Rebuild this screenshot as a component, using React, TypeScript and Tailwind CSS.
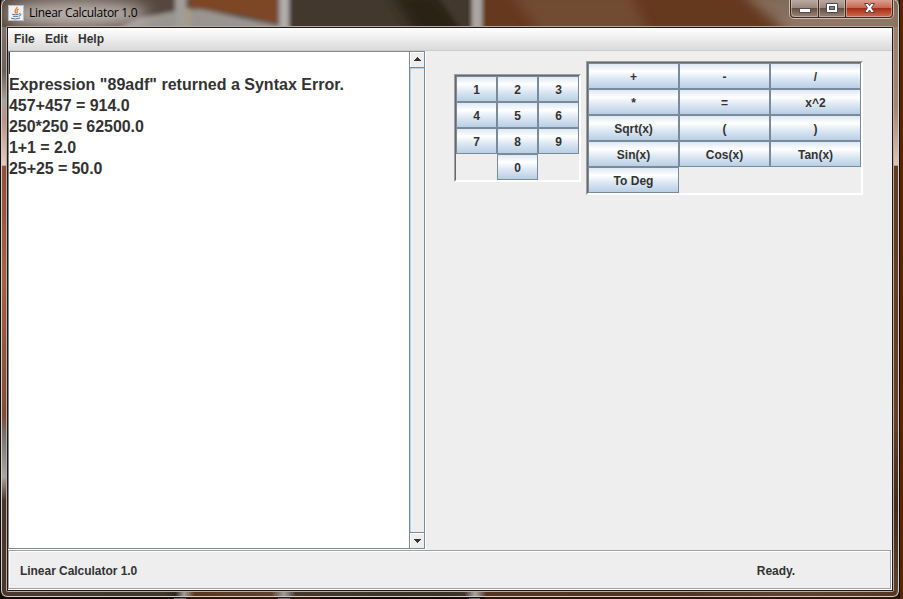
import React from "react";

const digits = ["1", "2", "3", "4", "5", "6", "7", "8", "9", "", "0", ""];
const functions = ["+", "-", "/", "*", "=", "x^2", "Sqrt(x)", "(", ")", "Sin(x)", "Cos(x)", "Tan(x)", "To Deg"];
const history = [
  { text: 'Expression "89adf" returned a Syntax Error.', spacing: "tracking-[0.015px]" },
  { text: "457+457 = 914.0", spacing: "tracking-[-0.03px]" },
  { text: "250*250 = 62500.0", spacing: "tracking-[-0.05px]" },
  { text: "1+1 = 2.0", spacing: "tracking-[-0.06px]" },
  { text: "25+25 = 50.0", spacing: "tracking-[-0.08px]" },
];

function Key({ label }: { label: string }) {
  if (!label) return <div />;
  return (
    <button className="flex h-[26px] items-center justify-center border border-[#7a8a99] bg-[linear-gradient(#dde8f3,#ffffff_30%,#dde8f3_60%,#b8cfe5)] pt-[2px] text-[12px] leading-none font-bold">
      {label}
    </button>
  );
}

function Glass() {
  return (
    <svg className="absolute inset-0" width="903" height="599" viewBox="0 0 903 599">
      <defs>
        <filter id="soft" x="-20%" y="-20%" width="140%" height="140%">
          <feGaussianBlur stdDeviation="2.2" />
        </filter>
        <filter id="softer" x="-20%" y="-40%" width="140%" height="180%">
          <feGaussianBlur stdDeviation="6" />
        </filter>
        <filter id="haze" x="-50%" y="-100%" width="200%" height="300%">
          <feGaussianBlur stdDeviation="8" />
        </filter>
        <linearGradient id="left" x1="0" y1="0" x2="0" y2="1">
          <stop offset="0" stopColor="#8b8078" />
          <stop offset=".12" stopColor="#6b605b" />
          <stop offset=".17" stopColor="#aaa29e" />
          <stop offset=".2" stopColor="#b99283" />
          <stop offset=".277" stopColor="#e5cbc1" />
          <stop offset=".279" stopColor="#925038" />
          <stop offset=".46" stopColor="#a86144" />
          <stop offset=".7" stopColor="#854d36" />
          <stop offset=".73" stopColor="#777270" />
          <stop offset=".8" stopColor="#aaa6a2" />
          <stop offset=".84" stopColor="#4a342b" />
          <stop offset="1" stopColor="#49392f" />
        </linearGradient>
        <linearGradient id="right" x1="0" y1="0" x2="0" y2="1">
          <stop offset="0" stopColor="#987d6c" />
          <stop offset=".18" stopColor="#a58573" />
          <stop offset=".277" stopColor="#dec5b7" />
          <stop offset=".279" stopColor="#653b21" />
          <stop offset=".7" stopColor="#68412a" />
          <stop offset=".85" stopColor="#442b1c" />
          <stop offset="1" stopColor="#60432f" />
        </linearGradient>
        <linearGradient id="bottom">
          <stop offset="0" stopColor="#49392f" />
          <stop offset=".18" stopColor="#40362c" />
          <stop offset=".192" stopColor="#30261c" />
          <stop offset=".202" stopColor="#a09d97" />
          <stop offset=".214" stopColor="#5b351d" />
          <stop offset=".3" stopColor="#60412c" />
          <stop offset=".314" stopColor="#a09d97" />
          <stop offset=".327" stopColor="#44372c" />
          <stop offset=".5" stopColor="#3b3026" />
          <stop offset=".516" stopColor="#403329" />
          <stop offset=".528" stopColor="#aaa7a2" />
          <stop offset=".541" stopColor="#55351f" />
          <stop offset=".75" stopColor="#51331f" />
          <stop offset=".88" stopColor="#60432f" />
          <stop offset="1" stopColor="#56351f" />
        </linearGradient>
      </defs>
      <rect width="903" height="599" fill="#120b07" />
      <rect x="180" y="597" width="140" height="2" fill="#2b1609" />
      <rect x="485" y="597" width="418" height="2" fill="#2b1609" />
      <rect x="899" width="4" height="599" fill="#552505" />
      <rect x="899" width="1" height="599" fill="#160e09" />
      <path d="M174 598.5h12M278 598.5h12M469 598.5h11" stroke="#697176" />
      <rect x="1" y="-5" width="898" height="602" rx="6" fill="#4b4034" />
      <rect x="2" y="0" width="5" height="596" fill="url(#left)" />
      <rect x="893" y="0" width="5" height="596" fill="url(#right)" />
      <rect x="4" y="591" width="892" height="5" fill="url(#bottom)" />
      <svg x="2" width="896" height="27" viewBox="2 0 896 27">
        <rect width="903" height="27" fill="#493b30" />
        <g filter="url(#soft)">
          <rect x="-5" y="-8" width="185" height="44" fill="#54463d" />
          <path d="M105 36L140 18L176 11L200 9L282 26V36Z" fill="#999592" />
          <rect x="175" y="-8" width="12" height="43" fill="#a09d99" />
          <path d="M188-8H278V24L240 15L190 8Z" fill="#7d4626" />
          <rect x="186" y="8" width="5" height="24" fill="#a59c7f" />
          <rect x="279" y="-8" width="10" height="43" fill="#b2aeab" />
          <rect x="289" y="-8" width="182" height="44" fill="#43382e" />
        </g>
        <path d="M390-8H436L470 36H418Z" fill="#2b2117" filter="url(#softer)" />
        <path d="M436-8H472V36H466Z" fill="#43372d" filter="url(#soft)" />
        <rect x="483" y="-8" width="420" height="44" fill="#65391e" />
        <g filter="url(#softer)">
          <path d="M510-8H630L650 36H542Z" fill="#714b31" />
          <path d="M740-8H910V36H790Z" fill="#836c5a" />
        </g>
        <g filter="url(#soft)">
          <rect x="471" y="-8" width="12" height="44" fill="#aaa6a3" />
        </g>
        <ellipse cx="76" cy="14" rx="72" ry="13" fill="#d5cfcb" opacity=".8" filter="url(#haze)" />
        <rect x="785" y="17" width="115" height="12" fill="#a48b7d" opacity=".65" filter="url(#haze)" />
      </svg>
      <path d="M5 0Q1.5 1 1.5 6V590Q1.5 596.5 8 596.5H892Q898.5 596.5 898.5 590V6Q898.5 1 895 0" fill="none" stroke="#d4ccc6" />
      <rect x="6.5" y="26.5" width="887" height="565" rx="1" fill="none" stroke="#b5aca5" />
      <rect x="7.5" y="27.5" width="885" height="563" fill="none" stroke="#241812" />
    </svg>
  );
}

function JavaIcon() {
  return (
    <svg width="16" height="16" viewBox="0 0 16 16">
      <rect x=".5" y=".5" width="15" height="15" fill="#edf1f4" stroke="#b6bec4" />
      <path d="M9 1.8C9.5 4 5.2 4.6 7.8 8.3M10.7 4.2C7.2 5.3 10.4 6.5 8.7 8.5" fill="none" stroke="#ed7c32" strokeWidth="1.3" />
      <path d="M4.2 9.3Q7 10.2 10.5 9.3M5 11.2Q7.5 12 10 11.2M3 13.2Q7.5 15 12 13M11 8.8Q14 8.5 12 10.8L10.6 11.2" fill="none" stroke="#55789a" />
    </svg>
  );
}

function WindowButtons() {
  return (
    <svg width="105" height="20" viewBox="789 0 105 20">
      <defs>
        <linearGradient id="control" x1="0" y1="0" x2="0" y2="1">
          <stop stopColor="#b9aaa0" />
          <stop offset=".46" stopColor="#9a877c" />
          <stop offset=".5" stopColor="#655044" />
          <stop offset="1" stopColor="#9a8475" />
        </linearGradient>
        <linearGradient id="close" x1="0" y1="0" x2="0" y2="1">
          <stop stopColor="#dda08d" />
          <stop offset=".46" stopColor="#c46754" />
          <stop offset=".5" stopColor="#a72d16" />
          <stop offset="1" stopColor="#cf6b4c" />
        </linearGradient>
      </defs>
      <path d="M789.5 0V14Q789.5 18.5 794 18.5H889Q893.5 18.5 893.5 14V0" fill="#3b2921" stroke="#cbbcb2" />
      <path d="M791 0H818V17H794Q791 17 791 14Z" fill="url(#control)" />
      <path d="M819 0H845V17H819Z" fill="url(#control)" />
      <path d="M846 0H892V14Q892 17 889 17H846Z" fill="url(#close)" />
      <path d="M791.5 0V13Q791.5 16.5 795 16.5H817.5V0M819.5 0V16.5H844.5V0M846.5 0V16.5H888Q891.5 16.5 891.5 13V0" fill="none" stroke="#e0c9bd" strokeOpacity=".55" />
      <rect x="799.5" y="8.5" width="11" height="4" fill="#fff" stroke="#584d51" />
      <path d="M826.5 3.5H837.5V12.5H826.5Z" fill="#fff" stroke="#4b4b59" />
      <rect x="829.5" y="6.5" width="5" height="3" fill="#8f8178" stroke="#4b4b59" />
      <path d="M864.5 3.5H868L869.5 5.7L871 3.5H874.5L871.5 7.8L874.5 12.5H871L869.5 10L868 12.5H864.5L867.5 7.8Z" fill="#fff" stroke="#5a4148" />
    </svg>
  );
}

function Arrow({ down = false }: { down?: boolean }) {
  return (
    <svg width="9" height="5" viewBox="0 0 9 5" shapeRendering="crispEdges" className={down ? "rotate-180" : ""}>
      <path d="M4 0h1v1h1v1h1v1h1v1H1V3h1V2h1V1h1z" fill="#333" />
    </svg>
  );
}

function Sunken({ className, children }: { className: string; children: React.ReactNode }) {
  return (
    <section className={"border border-t-[#a0a0a0] border-r-white border-b-white border-l-[#a0a0a0] " + className}>
      <div className="border border-t-[#696969] border-r-white border-b-white border-l-[#696969]">{children}</div>
    </section>
  );
}

export default function App() {
  return (
    <div className="relative h-[599px] w-[903px] overflow-hidden font-['Liberation_Sans',Arial,sans-serif] text-[#333]">
      <Glass />
      <div className="relative flex h-full flex-col pr-[11px] pl-2">
        <header className="flex h-7 shrink-0 items-start">
          <div className="flex h-[26px] items-center">
            <JavaIcon />
            <span className="ml-[5px] font-['Open_Sans',sans-serif] text-[12px] tracking-[-0.3px] whitespace-nowrap text-black">Linear Calculator 1.0</span>
          </div>
          <div className="-mr-[2px] ml-auto"><WindowButtons /></div>
        </header>

        <div className="flex h-[562px] flex-col bg-[#eee]">
          <nav className="flex h-[23px] shrink-0 items-center border-b border-[#ccc] bg-[linear-gradient(#fff,#dadada)] pl-[6px] text-[12px] leading-none font-bold">
            <span className="w-[31px]">File</span>
            <span className="w-[33px]">Edit</span>
            <span>Help</span>
          </nav>

          <main className="flex h-[499px] shrink-0 items-start">
            <section className="flex h-[498px] w-[417px] shrink-0 border border-[#7a8a99] bg-white shadow-[1px_1px_0_#fff]">
              <div className="flex-1">
                <div className="h-[22px] border-l border-[#333]" />
                {history.map((line) => (
                  <p key={line.text} className={"h-[21px] text-[16px] leading-[21px] font-bold whitespace-nowrap " + line.spacing}>{line.text}</p>
                ))}
              </div>
              <div className="flex w-[15px] flex-col border-l border-[#7a8a99]">
                <div className="flex h-4 items-center justify-center border-b border-[#7a8a99] bg-[#eee] shadow-[inset_1px_1px_0_#fff]"><Arrow /></div>
                <div className="flex-1 border-t border-l border-[#b8cfe5] bg-[#eee]" />
                <div className="flex h-4 items-center justify-center border-t border-[#7a8a99] bg-[#eee] shadow-[inset_1px_1px_0_#fff]"><Arrow down /></div>
              </div>
            </section>

            <Sunken className="mt-[23px] ml-[29px]">
              <div className="grid grid-cols-[repeat(3,41px)]">
                {digits.map((d, i) => <Key key={i} label={d} />)}
              </div>
            </Sunken>

            <Sunken className="mt-[10px] ml-[5px]">
              <div className="grid grid-cols-[repeat(3,91px)]">
                {functions.map((f) => <Key key={f} label={f} />)}
              </div>
            </Sunken>
          </main>

          <div className="h-10 border-r border-b border-white">
            <footer className="flex h-[39px] items-center justify-between border border-[#a0a0a0] pt-[3px] pr-[95px] pl-[11px] text-[12px] leading-none font-bold tracking-[-0.04px] shadow-[inset_1px_1px_0_#fff]">
              <span>Linear Calculator 1.0</span>
              <span>Ready.</span>
            </footer>
          </div>
        </div>
      </div>
    </div>
  );
}
